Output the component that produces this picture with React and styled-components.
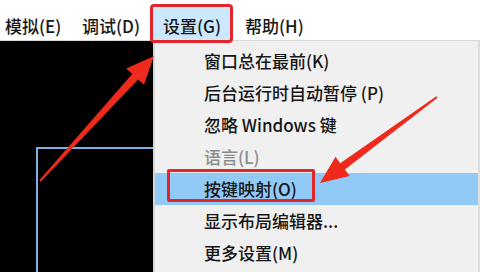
import React from "react"
import styled, { createGlobalStyle } from "styled-components"

const Global = createGlobalStyle`
  html, body {
    margin: 0;
    padding: 0;
    width: 480px;
    height: 272px;
    overflow: hidden;
    background: #ffffff;
  }
  * { box-sizing: border-box; }
`

const Screen = styled.div`
  position: relative;
  width: 480px;
  height: 272px;
  overflow: hidden;
  display: flex;
  flex-direction: column;
  font-family: "Noto Sans CJK SC", "Noto Sans", sans-serif;
  font-size: 17px;
  font-weight: 500;
  color: #161616;
`

const MenuBar = styled.div`
  height: 41px;
  display: grid;
  grid-template-columns: 77px 81px 82px auto;
  align-items: end;
  padding-left: 5px;
  background: #ffffff;
  border-bottom: 1px solid #d9d9d9;
`

const BarItem = styled.div`
  height: 33px;
  line-height: 28px;
  padding-top: 5px;
  white-space: nowrap;
  ${p => p.$active && `
    margin-left: -10px;
    padding-left: 10px;
    width: 77px;
    background: #cce8ff;
    outline: 3px solid #e2262a;
    border-radius: 1px;
    position: relative;
    z-index: 2;
  `}
`

const Body = styled.div`
  flex: 1;
  display: flex;
  min-height: 0;
`

const Canvas = styled.div`
  width: 153px;
  background: #000000;
  overflow: hidden;
  padding: 106px 0 0 36px;
`

const Frame = styled.div`
  width: 200px;
  height: 200px;
  border: 2px solid #7eb1e2;
`

const Menu = styled.div`
  flex: 1;
  background: #f0f0f0;
  border-left: 2px solid #d6d6d6;
  border-right: 2px solid #dedede;
  padding-top: 4px;
  display: flex;
  flex-direction: column;
`

const Row = styled.div`
  position: relative;
  height: 32px;
  line-height: 32px;
  padding-left: 49px;
  white-space: nowrap;
  color: ${p => (p.$disabled ? "#8d8d8d" : "#161616")};
  background: ${p => (p.$hover ? "#91c9f7" : "transparent")};
`

const Mark = styled.span`
  position: absolute;
  left: 12px;
  top: -4px;
  width: 148px;
  height: 33px;
  border: 3px solid #e2262a;
  border-radius: 2px;
`

const Overlay = styled.svg`
  position: absolute;
  left: 0;
  top: 0;
  pointer-events: none;
  z-index: 5;
`

function arrow(tx, ty, hx, hy, tail, shaft, headLen, head) {
  const dx = hx - tx
  const dy = hy - ty
  const len = Math.hypot(dx, dy)
  const ux = dx / len
  const uy = dy / len
  const nx = -uy
  const ny = ux
  const bx = hx - ux * headLen
  const by = hy - uy * headLen
  const pts = [
    [tx + nx * tail, ty + ny * tail],
    [bx + nx * shaft, by + ny * shaft],
    [bx + nx * head, by + ny * head],
    [hx, hy],
    [bx - nx * head, by - ny * head],
    [bx - nx * shaft, by - ny * shaft],
    [tx - nx * tail, ty - ny * tail],
  ]
  return pts.map(p => p.map(v => v.toFixed(1)).join(",")).join(" ")
}

const items = [
  { text: "窗口总在最前(K)" },
  { text: "后台运行时自动暂停 (P)" },
  { text: "忽略 Windows 键" },
  { text: "语言(L)", disabled: true },
  { text: "按键映射(O)", hover: true, mark: true },
  { text: "显示布局编辑器..." },
  { text: "更多设置(M)" },
]

export default function App() {
  return (
    <Screen>
      <Global />
      <MenuBar>
        <BarItem>模拟(E)</BarItem>
        <BarItem>调试(D)</BarItem>
        <BarItem $active>设置(G)</BarItem>
        <BarItem>帮助(H)</BarItem>
      </MenuBar>
      <Body>
        <Canvas>
          <Frame />
        </Canvas>
        <Menu>
          {items.map(it => (
            <Row key={it.text} $disabled={it.disabled} $hover={it.hover}>
              {it.mark && <Mark />}
              {it.text}
            </Row>
          ))}
        </Menu>
      </Body>
      <Overlay width="480" height="272" viewBox="0 0 480 272">
        <polygon points={arrow(40, 181, 154, 56, 1, 4, 28, 12)} fill="#ee2a1c" />
        <polygon points={arrow(437, 97, 320, 183, 1, 4, 28, 12)} fill="#ee2a1c" />
      </Overlay>
    </Screen>
  )
}
